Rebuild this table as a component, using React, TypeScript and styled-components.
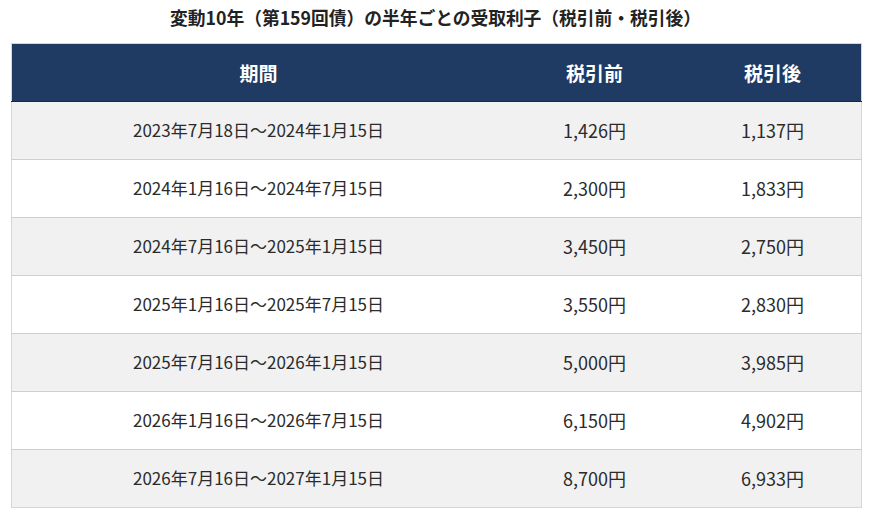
import React from 'react';
import styled, { createGlobalStyle } from "styled-components";

const GlobalStyle = createGlobalStyle`
  html, body {
    margin: 0;
    padding: 0;
    background: #fff;
    font-family: "Noto Sans CJK JP", "Noto Sans", sans-serif;
    color: #333;
  }
`

const Wrapper = styled.div`
  padding: 5px 10px 0 11px;
  width: 870px;
  box-sizing: border-box;
`

const Title = styled.h2`
  margin: 0 0 14px;
  height: 24px;
  line-height: 24px;
  text-align: center;
  font-size: 18px;
  font-weight: 700;
  color: #222;
  transform: scaleX(0.985);
`

const Table = styled.table`
  width: 849px;
  border-collapse: collapse;
  border: 1px solid #d6d6d6;
  table-layout: fixed;
`

const HeadCell = styled.th<{ $w: number }>`
  width: ${(p) => p.$w}px;
  background-color: #1f3a63;
  color: #fff;
  font-size: 19px;
  font-weight: 700;
  height: 57px;
  padding: 0;
  border-bottom: 1px solid #15294a;
`

const Row = styled.tr<{ $alt: boolean }>`
  background-color: ${(p) => (p.$alt ? '#f1f1f1' : '#fff')};
`

const Cell = styled.td<{ $num?: boolean }>`
  height: 58px;
  box-sizing: border-box;
  padding: 0 0 2px;
  text-align: center;
  font-size: ${(p) => (p.$num ? '18px' : '17px')};
  color: #2b2b2b;
  border-top: 1px solid #cfcfcf;
`

const rows = [
  ['2023年7月18日～2024年1月15日', '1,426円', '1,137円'],
  ['2024年1月16日～2024年7月15日', '2,300円', '1,833円'],
  ['2024年7月16日～2025年1月15日', '3,450円', '2,750円'],
  ['2025年1月16日～2025年7月15日', '3,550円', '2,830円'],
  ['2025年7月16日～2026年1月15日', '5,000円', '3,985円'],
  ['2026年1月16日～2026年7月15日', '6,150円', '4,902円'],
  ['2026年7月16日～2027年1月15日', '8,700円', '6,933円'],
];

const App = () => {
  return (
    <>
      <GlobalStyle />
      <Wrapper>
        <Title>変動10年（第159回債）の半年ごとの受取利子（税引前・税引後）</Title>
        <Table>
          <thead>
            <tr>
              <HeadCell $w={493}>期間</HeadCell>
              <HeadCell $w={179}>税引前</HeadCell>
              <HeadCell $w={177}>税引後</HeadCell>
            </tr>
          </thead>
          <tbody>
            {rows.map((r, i) => (
              <Row key={r[0]} $alt={i % 2 === 0}>
                <Cell>{r[0]}</Cell>
                <Cell $num>{r[1]}</Cell>
                <Cell $num>{r[2]}</Cell>
              </Row>
            ))}
          </tbody>
        </Table>
      </Wrapper>
    </>
  );
};

export default App;
